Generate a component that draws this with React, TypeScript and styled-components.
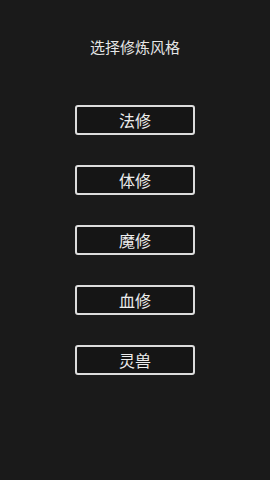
import styled, { createGlobalStyle } from "styled-components";

const GlobalStyle = createGlobalStyle`
  html, body {
    margin: 0;
    padding: 0;
    background: #1a1a1a;
  }
  body {
    font-family: "Noto Sans CJK SC", "Noto Sans", sans-serif;
  }
`;

const Screen = styled.div`
  width: 270px;
  height: 480px;
  background: #1a1a1a;
  display: flex;
  flex-direction: column;
  align-items: center;
  padding-top: 37px;
  box-sizing: border-box;
`;

const Title = styled.div`
  color: #e6e6e6;
  font-size: 15px;
  line-height: 20px;
  height: 20px;
`;

const Menu = styled.div`
  display: flex;
  flex-direction: column;
  gap: 30px;
  margin-top: 48px;
`;

const StyleButton = styled.button`
  width: 120px;
  height: 30px;
  box-sizing: border-box;
  display: flex;
  align-items: center;
  justify-content: center;
  border: 2px solid #dcdcdc;
  border-radius: 3px;
  background: #151515;
  color: #ececec;
  font-family: "Noto Sans CJK SC", "Noto Sans", sans-serif;
  font-size: 16px;
  line-height: 1;
  padding: 0 0 1px;
  cursor: pointer;
`;

const styles = ["法修", "体修", "魔修", "血修", "灵兽"];

export default function App() {
  return (
    <>
      <GlobalStyle />
      <Screen>
        <Title>选择修炼风格</Title>
        <Menu>
          {styles.map((s) => (
            <StyleButton key={s}>{s}</StyleButton>
          ))}
        </Menu>
      </Screen>
    </>
  );
}
